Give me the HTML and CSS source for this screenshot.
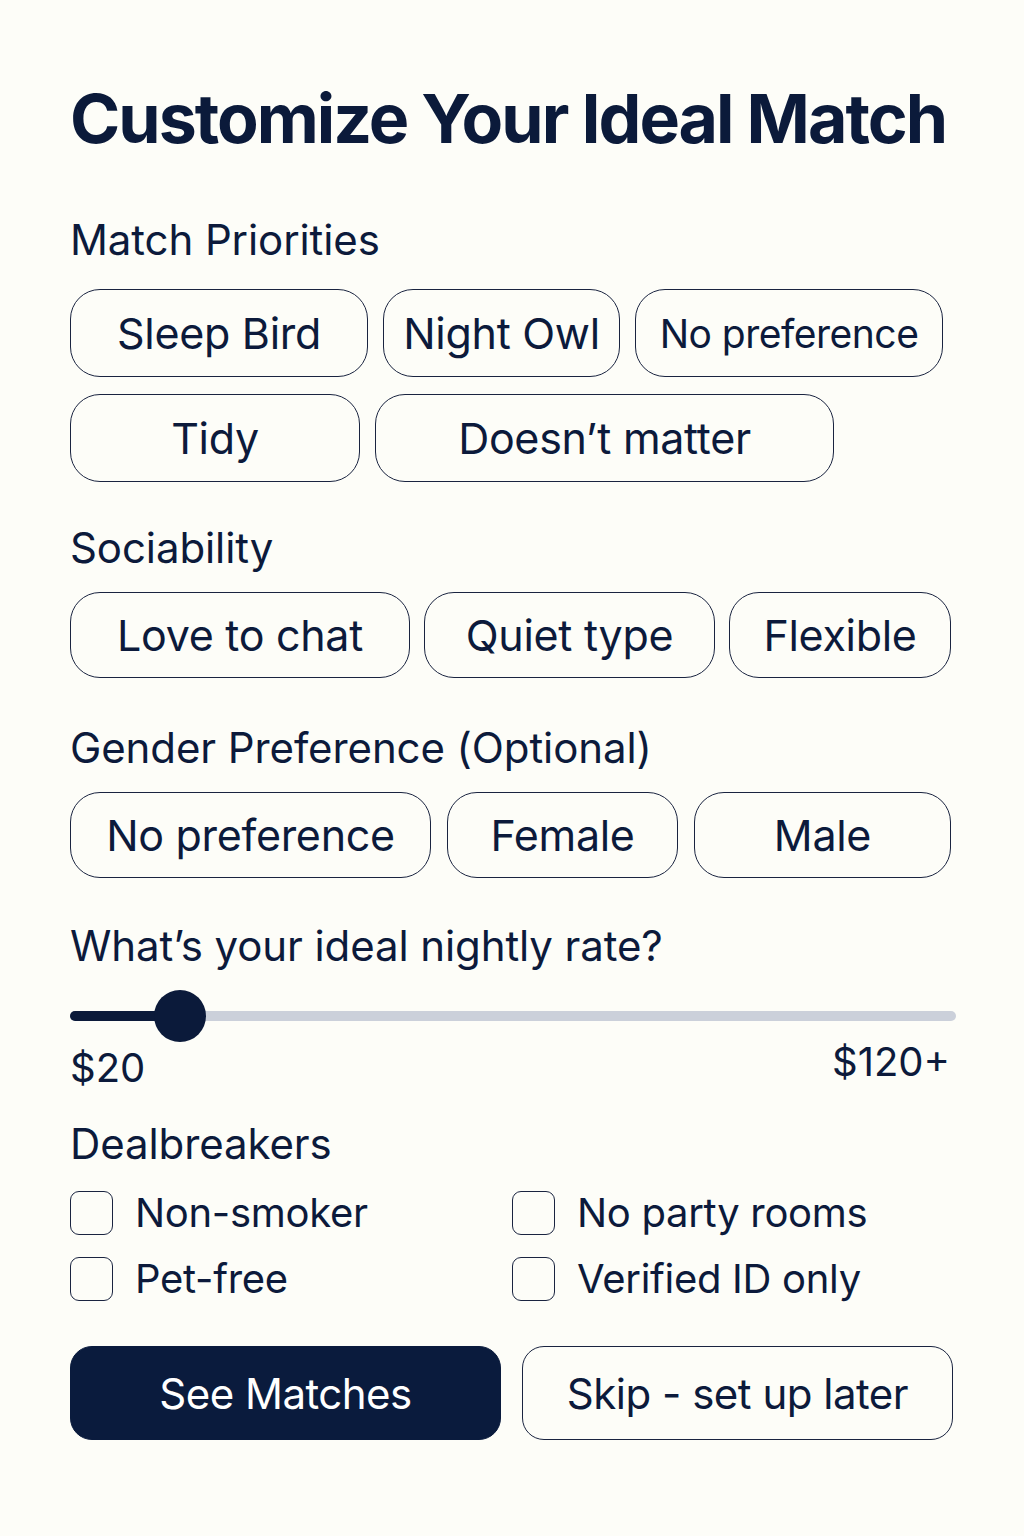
FILE: index.html
```html
<!DOCTYPE html>
<html lang="en">
<head>
<meta charset="utf-8">
<title>Customize Your Ideal Match</title>
<link rel="stylesheet" href="styles.css">
</head>
<body>
<main class="page">
  <h1 class="title">Customize Your Ideal Match</h1>

  <section class="group group-first">
    <h2 class="label">Match Priorities</h2>
    <div class="chips row-a">
      <button class="chip">Sleep Bird</button>
      <button class="chip">Night Owl</button>
      <button class="chip chip-tight">No preference</button>
    </div>
    <div class="chips row-b">
      <button class="chip">Tidy</button>
      <button class="chip">Doesn’t matter</button>
    </div>
  </section>

  <section class="group">
    <h2 class="label">Sociability</h2>
    <div class="chips row-c">
      <button class="chip">Love to chat</button>
      <button class="chip">Quiet type</button>
      <button class="chip">Flexible</button>
    </div>
  </section>

  <section class="group group-gender">
    <h2 class="label">Gender Preference (Optional)</h2>
    <div class="chips row-d">
      <button class="chip">No preference</button>
      <button class="chip">Female</button>
      <button class="chip">Male</button>
    </div>
  </section>

  <section class="group group-rate">
    <h2 class="label">What’s your ideal nightly rate?</h2>
    <div class="slider">
      <div class="track"><div class="fill"></div></div>
      <div class="thumb"></div>
    </div>
    <div class="range">
      <span class="range-min">$20</span>
      <span class="range-max">$120+</span>
    </div>
  </section>

  <section class="group group-deal">
    <h2 class="label">Dealbreakers</h2>
    <div class="checks">
      <label class="check"><span class="box"></span><span>Non-smoker</span></label>
      <label class="check"><span class="box"></span><span>No party rooms</span></label>
      <label class="check"><span class="box"></span><span>Pet-free</span></label>
      <label class="check"><span class="box"></span><span>Verified ID only</span></label>
    </div>
  </section>

  <div class="actions">
    <button class="btn btn-primary">See Matches</button>
    <button class="btn btn-secondary">Skip - set up later</button>
  </div>
</main>
</body>
</html>
```

FILE: styles.css
```css
* { box-sizing: border-box; }

html, body {
  margin: 0;
  padding: 0;
  background: #fdfdf8;
}

body {
  font-family: Inter, "Noto Sans", "Liberation Sans", sans-serif;
  color: #0c1a3b;
  width: 1024px;
  min-height: 1536px;
}

.page {
  padding: 84px 70px 0 70px;
}

.title {
  margin: 0;
  font-size: 68px;
  font-weight: 700;
  line-height: 68px;
  letter-spacing: -2px;
  white-space: nowrap;
  color: #0b1a3a;
}

.group { margin-top: 41px; }
.group-first { margin-top: 63px; }
.group-gender { margin-top: 45px; }
.group-rate { margin-top: 43px; }

.label {
  margin: 0 0 19px 0;
  font-size: 42px;
  font-weight: 400;
  line-height: 50px;
  letter-spacing: -0.1px;
}

.group-first .label { margin-bottom: 24px; }

.chips {
  display: grid;
  column-gap: 15px;
}
.chips + .chips { margin-top: 17px; }

.row-a { grid-template-columns: 298px 237px 308px; }
.row-b { grid-template-columns: 290px 459px; }
.row-c { grid-template-columns: 340px 291px 222px; column-gap: 14px; }
.row-d { grid-template-columns: 361px 231px 257px; column-gap: 16px; }

.chip {
  height: 88px;
  border: 1.5px solid #1a2440;
  border-radius: 30px;
  background: transparent;
  font-family: inherit;
  font-size: 43px;
  font-weight: 400;
  color: #0c1a3b;
  letter-spacing: -0.3px;
  padding: 0;
  display: flex;
  align-items: center;
  justify-content: center;
  white-space: nowrap;
}
.chip-tight { font-size: 39px; letter-spacing: -0.5px; }
.row-c .chip, .row-d .chip { height: 86px; }

.slider {
  position: relative;
  height: 52px;
  margin-top: 6px;
}
.track {
  position: absolute;
  left: 0;
  right: -2px;
  top: 21px;
  height: 10px;
  border-radius: 5px;
  background: #cbd0da;
  overflow: hidden;
}
.fill {
  width: 110px;
  height: 100%;
  background: #0b1a3a;
}
.thumb {
  position: absolute;
  left: 84px;
  top: 0;
  width: 52px;
  height: 52px;
  border-radius: 50%;
  background: #0b1a3a;
}

.range {
  display: flex;
  justify-content: space-between;
  align-items: flex-start;
  font-size: 40px;
  line-height: 48px;
}
.range-min { margin-top: 2px; }
.range-max { margin-top: -4px; margin-right: 4px; }

.group-deal { margin-top: 27px; }
.group-deal .label { margin-bottom: 22px; }

.checks {
  display: grid;
  grid-template-columns: 442px 1fr;
  row-gap: 22px;
}
.check {
  display: flex;
  align-items: center;
  gap: 22px;
  font-size: 40px;
  line-height: 44px;
  letter-spacing: -0.3px;
}
.box {
  width: 43px;
  height: 44px;
  border: 1.5px solid #1a2440;
  border-radius: 9px;
  flex: none;
}

.actions {
  display: grid;
  grid-template-columns: 431px 431px;
  column-gap: 21px;
  margin-top: 45px;
}
.btn {
  height: 94px;
  border-radius: 22px;
  font-family: inherit;
  font-size: 42px;
  font-weight: 400;
  letter-spacing: -0.5px;
  padding: 0;
}
.btn-primary {
  background: #0a1b3d;
  color: #ffffff;
  border: 1.5px solid #0a1b3d;
}
.btn-secondary {
  background: transparent;
  color: #0c1a3b;
  border: 1.5px solid #1a2440;
}
```
